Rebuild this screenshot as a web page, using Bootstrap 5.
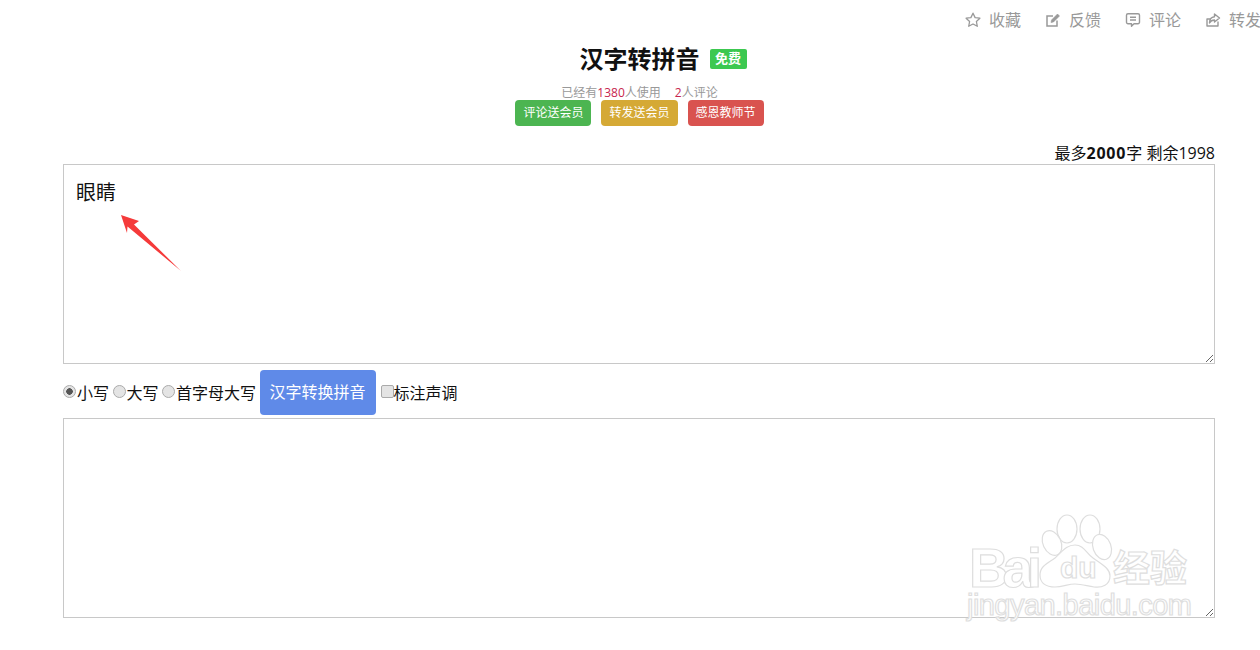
<!DOCTYPE html>
<html lang="zh">
<head>
<meta charset="utf-8">
<title>汉字转拼音</title>
<link href="https://cdn.jsdelivr.net/npm/bootstrap@5.3.0/dist/css/bootstrap.min.css" rel="stylesheet">
<style>
html,body{height:650px;overflow:hidden;background:#fff;}
body{font-family:"Open Sans","Noto Sans CJK SC","Liberation Sans",sans-serif;color:#111;font-size:16px;line-height:1.25;position:relative;}
.topbar{height:40px;padding-top:10px;gap:24px;color:#999;margin-right:-1px;}
.topitem{display:flex;align-items:center;gap:8px;height:20px;}
.topitem svg{width:16px;height:16px;flex:none;}
.titlerow{height:38px;margin-top:1px;gap:10px;padding-left:19px;}
.apptitle{font-size:24px;font-weight:700;line-height:38px;margin:-2px 0 0;color:#111;}
.freetag{background:#3cc850;color:#fff;font-size:13px;font-weight:700;line-height:19px;height:20px;width:37px;text-align:center;border-radius:2px;margin-top:-2px;margin-right:-47px;}
.statline{font-size:12px;color:#999;line-height:14px;margin-top:7px;gap:14px;padding-left:19px;}
.statline em{font-style:normal;color:#c7254e;}
.pillrow{gap:10px;padding-left:19px;}
.pillbtn{height:26px;font-size:12px;line-height:26px;padding:0 8px;border-radius:4px;color:#fff;}
.pill-g{background:#4cb551;}.pill-y{background:#d5a935;}.pill-r{background:#d9534f;}
.mainwrap{margin:0 45px 0 63px;}
.counter{line-height:18px;padding-top:18px;height:38px;text-align:right;}
.counter b{letter-spacing:.8px;}
.txtbox{display:block;width:100%;height:200px;border:1px solid #c8c8c8;border-radius:0;padding:14px 12px;font-size:20px;line-height:28px;color:#111;font-family:inherit;outline:0;}
.optrow{height:54px;padding-top:3px;}
.optrow label{display:flex;align-items:center;margin-right:3.5px;}
.optrow input{appearance:none;-webkit-appearance:none;width:13px;height:13px;margin:0 1px 2px 0;border:1px solid #aaa;background:#e4e4e4;flex:none;}
.optrow input[type=radio]{border-radius:50%;}
.optrow input[type=radio]:checked{background:radial-gradient(circle,#555 0 3px,#e4e4e4 3.5px);}
.optrow input[type=checkbox]{border-radius:2px;margin-right:0;}
.gobtn{background:#5f8ae8;color:#fff;height:45px;line-height:45px;padding:0 10px;border-radius:4px;margin-right:5px;}
.mark-overlay{position:absolute;left:0;top:0;pointer-events:none;}
.wm-big{font-family:"Liberation Sans",sans-serif;font-weight:700;}
.wm{fill:#fff;stroke:#dedede;stroke-width:1.2;}
.wm-cjk{font-family:"Noto Sans CJK SC",sans-serif;font-weight:700;}
</style>
</head>
<body>
<div class="topbar d-flex justify-content-end">
  <div class="topitem"><svg viewBox="0 0 16 16" fill="none" stroke="#999" stroke-width="1.3" stroke-linejoin="round"><path d="M8 1.2l2.1 4.4 4.8.6-3.5 3.3.9 4.8L8 12l-4.300 2.300.9-4.800L1.100 6.200l4.800-.6z"/></svg>收藏</div>
  <div class="topitem"><svg viewBox="0 0 16 16" fill="none" stroke="#999" stroke-width="1.500"><path d="M12 8.500V14H2V4h6"/><path d="M6 10.500l.5-2.500L12.500 2l2 2-6 6z" fill="#999" stroke-width=".6"/></svg>反馈</div>
  <div class="topitem"><svg viewBox="0 0 16 16" fill="none" stroke="#999" stroke-width="1.400" stroke-linejoin="round"><path d="M3 1.700h10a1.500 1.500 0 0 1 1.500 1.500v7a1.500 1.500 0 0 1-1.500 1.500H9l-2.500 2.500v-2.500H3a1.500 1.500 0 0 1-1.500-1.500v-7A1.500 1.500 0 0 1 3 1.700z"/><path d="M5 5.200h6M5 8h6"/></svg>评论</div>
  <div class="topitem"><svg viewBox="0 0 16 16" fill="none" stroke="#999" stroke-width="1.400" stroke-linejoin="round"><path d="M13 9.500V14H2V7h3"/><path d="M9.500 2l5 4-5 4V8C7 8 5.500 9 4.500 11c0-3.500 2-6 5-6.300z"/></svg>转发</div>
</div>

<div class="titlerow d-flex justify-content-center align-items-center">
  <h1 class="apptitle">汉字转拼音</h1>
  <span class="freetag">免费</span>
</div>
<div class="statline d-flex justify-content-center">
  <span>已经有<em>1380</em>人使用</span><span><em>2</em>人评论</span>
</div>
<div class="pillrow d-flex justify-content-center">
  <span class="pillbtn pill-g">评论送会员</span>
  <span class="pillbtn pill-y">转发送会员</span>
  <span class="pillbtn pill-r">感恩教师节</span>
</div>

<div class="mainwrap">
  <div class="counter">最多<b>2000</b>字 剩余1998</div>
  <textarea class="txtbox">眼睛</textarea>
  <div class="optrow d-flex align-items-center">
    <label><input type="radio" name="cs" checked>小写</label>
    <label><input type="radio" name="cs">大写</label>
    <label><input type="radio" name="cs">首字母大写</label>
    <span class="gobtn">汉字转换拼音</span>
    <label><input type="checkbox">标注声调</label>
  </div>
  <textarea class="txtbox"></textarea>
</div>

<svg class="mark-overlay" width="1260" height="650" viewBox="0 0 1260 650">
  <polygon points="121,215 139,221 134,224.500 181,271 127.500,226.500 127,233" fill="#f53a3a"/>
  <g class="wm">
    <ellipse cx="1067" cy="529" rx="10" ry="14"/>
    <ellipse cx="1090" cy="529" rx="10" ry="14"/>
    <ellipse cx="1052" cy="543" rx="9" ry="13" transform="rotate(-25 1052 543)"/>
    <ellipse cx="1102" cy="547" rx="9" ry="13" transform="rotate(-20 1102 547)"/>
    <path d="M1075 545c9 0 11 8 18 13 8 6 17 10 17 18 0 9-8 12-16 11-7-1-12-3-19-3s-12 3-20 3c-9 0-15-4-15-12 0-9 8-12 15-17 7-6 11-13 20-13z"/>
    <text class="wm-big" x="969" y="587" font-size="55" textLength="73">Bai</text>
    <text class="wm-big" x="1060" y="578" font-size="30">du</text>
    <text class="wm-cjk" x="1113" y="582" font-size="37">经验</text>
    <text x="967" y="615" font-size="29" font-family="Liberation Sans, sans-serif" textLength="225">jingyan.baidu.com</text>
  </g>
</svg>
</body>
</html>
